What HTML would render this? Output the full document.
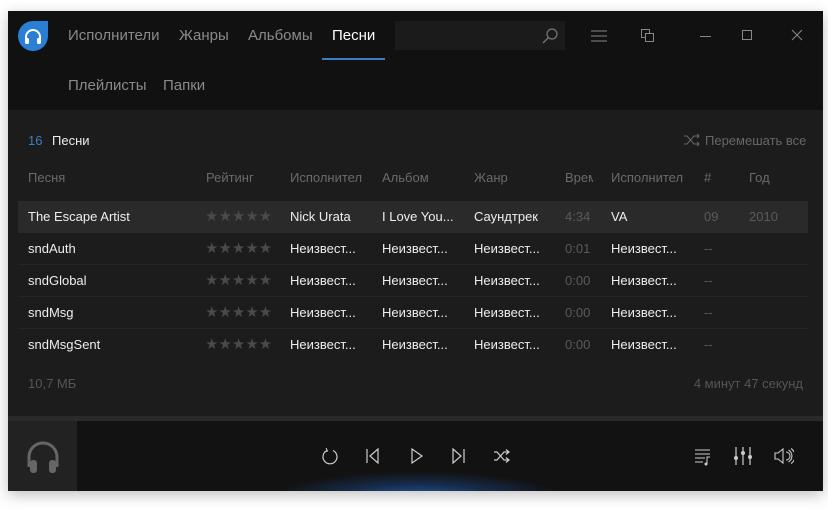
<!DOCTYPE html>
<html><head><meta charset="utf-8"><style>
*{margin:0;padding:0;box-sizing:border-box}
body{width:828px;height:513px;background:#fff;position:relative;overflow:hidden;font-family:"Liberation Sans",sans-serif;font-size:13px}
#win{position:absolute;left:8px;top:11px;width:815px;height:480px;background:#111;box-shadow:0 4px 14px rgba(0,0,0,.25);overflow:hidden}
.a{position:absolute;white-space:nowrap}
.tab{font-size:15px;color:#8a8a8a;top:16px}
#content{position:absolute;left:0;top:99px;width:815px;height:306px;background:#1c1c1c}
#sep{position:absolute;left:0;top:405px;width:815px;height:5px;background:#2a2a2a}
#bar{position:absolute;left:0;top:410px;width:815px;height:70px;background:#121212;overflow:hidden}
.row{position:absolute;left:10px;width:790px;height:32px;border-bottom:1px solid #262626}
.row span{position:absolute;top:8px;color:#eee;font-size:13px;white-space:nowrap}
.row .st{color:#4a4a4a;letter-spacing:0;font-size:15px;top:6px}
.row .g{color:#5a5a5a}
.hd{color:#6a6a6a;top:60px}
</style></head><body>
<div id="win">
<svg class="a" style="left:10px;top:10px" width="30" height="30" viewBox="0 0 30 30"><path d="M15 0H30V15A15 15 0 1 1 15 0Z" fill="#2a7fd4"/><path d="M8 21V16a7 7 0 0 1 14 0v5" fill="none" stroke="#fff" stroke-width="2"/><rect x="7" y="17" width="4" height="6" rx="1.5" fill="#fff"/><rect x="19" y="17" width="4" height="6" rx="1.5" fill="#fff"/></svg>
<div class="a tab" style="left:60px">Исполнители</div>
<div class="a tab" style="left:171px">Жанры</div>
<div class="a tab" style="left:240px">Альбомы</div>
<div class="a tab" style="left:324px;color:#fff">Песни</div>
<div class="a" style="left:314px;top:47px;width:63px;height:2px;background:#3a7fc4"></div>
<div class="a" style="left:387px;top:10px;width:170px;height:29px;background:#1b1b1b"></div>
<svg class="a" style="left:533px;top:16px" width="18" height="18"><circle cx="11" cy="7" r="5" fill="none" stroke="#777" stroke-width="1.2"/><path d="M7.5 10.5L2 16" stroke="#777" stroke-width="1.3"/></svg>
<svg class="a" style="left:582px;top:18px" width="18" height="14"><path d="M1 2H17M1 7H17M1 12H17" stroke="#888" stroke-width="1"/></svg>
<svg class="a" style="left:632px;top:17px" width="16" height="16"><rect x="1.5" y="1.5" width="8" height="8" fill="none" stroke="#888"/><rect x="5.5" y="5.5" width="8" height="8" fill="#111" stroke="#888"/></svg>
<div class="a" style="left:692px;top:25px;width:11px;height:1px;background:#888"></div>
<div class="a" style="left:734px;top:19px;width:10px;height:10px;border:1px solid #888"></div>
<svg class="a" style="left:783px;top:18px" width="12" height="12"><path d="M1 1L11 11M11 1L1 11" stroke="#888"/></svg>
<div class="a tab" style="left:60px;top:66px">Плейлисты</div>
<div class="a tab" style="left:155px;top:66px">Папки</div>
<div id="content">
<div class="a" style="left:20px;top:23px;color:#3a7fc4">16</div>
<div class="a" style="left:44px;top:23px;color:#eee">Песни</div>
<svg class="a" style="left:675px;top:24px" width="18" height="12"><path d="M1 2h3l7 8h5M1 10h3l7-8h5M14 0l2 2-2 2M14 8l2 2-2 2" fill="none" stroke="#666"/></svg>
<div class="a" style="left:697px;top:23px;color:#666">Перемешать все</div>
<div class="a hd" style="left:20px">Песня</div>
<div class="a hd" style="left:198px">Рейтинг</div>
<div class="a hd" style="left:282px">Исполнител</div>
<div class="a hd" style="left:374px">Альбом</div>
<div class="a hd" style="left:466px">Жанр</div>
<div class="a hd" style="left:557px;width:28px;overflow:hidden">Время</div>
<div class="a hd" style="left:603px">Исполнител</div>
<div class="a hd" style="left:696px">#</div>
<div class="a hd" style="left:741px">Год</div>

<div class="row" style="top:91px;background:#2a2a2a;border:none"><span style="left:10px">The Escape Artist</span><span class="st" style="left:187px">★★★★★</span><span style="left:272px">Nick Urata</span><span style="left:364px">I Love You...</span><span style="left:456px">Саундтрек</span><span class="g" style="left:547px">4:34</span><span style="left:593px">VA</span><span class="g" style="left:686px">09</span><span class="g" style="left:731px">2010</span></div>
<div class="row" style="top:123px"><span style="left:10px">sndAuth</span><span class="st" style="left:187px">★★★★★</span><span style="left:272px">Неизвест...</span><span style="left:364px">Неизвест...</span><span style="left:456px">Неизвест...</span><span class="g" style="left:547px">0:01</span><span style="left:593px">Неизвест...</span><span class="g" style="left:686px">--</span></div>
<div class="row" style="top:155px"><span style="left:10px">sndGlobal</span><span class="st" style="left:187px">★★★★★</span><span style="left:272px">Неизвест...</span><span style="left:364px">Неизвест...</span><span style="left:456px">Неизвест...</span><span class="g" style="left:547px">0:00</span><span style="left:593px">Неизвест...</span><span class="g" style="left:686px">--</span></div>
<div class="row" style="top:187px"><span style="left:10px">sndMsg</span><span class="st" style="left:187px">★★★★★</span><span style="left:272px">Неизвест...</span><span style="left:364px">Неизвест...</span><span style="left:456px">Неизвест...</span><span class="g" style="left:547px">0:00</span><span style="left:593px">Неизвест...</span><span class="g" style="left:686px">--</span></div>
<div class="row" style="top:219px;border:none"><span style="left:10px">sndMsgSent</span><span class="st" style="left:187px">★★★★★</span><span style="left:272px">Неизвест...</span><span style="left:364px">Неизвест...</span><span style="left:456px">Неизвест...</span><span class="g" style="left:547px">0:00</span><span style="left:593px">Неизвест...</span><span class="g" style="left:686px">--</span></div>
<div class="a" style="left:20px;top:266px;color:#555">10,7 МБ</div>
<div class="a" style="right:20px;top:266px;color:#555">4 минут 47 секунд</div>
</div>
<div id="sep"></div>
<div id="bar">
<div class="a" style="left:260px;top:50px;width:300px;height:60px;border-radius:50%;background:radial-gradient(ellipse at center,rgba(40,120,220,.85) 0%,rgba(30,90,180,.35) 40%,rgba(17,17,17,0) 70%)"></div>
<div class="a" style="left:0;top:0;width:69px;height:70px;background:#222"></div>
<svg class="a" style="left:17px;top:18px" width="36" height="36" viewBox="0 0 36 36"><path d="M4 28V18a14 14 0 0 1 28 0v10" fill="none" stroke="#666" stroke-width="3"/><rect x="5" y="21" width="7" height="13" rx="3" fill="#666"/><rect x="24" y="21" width="7" height="13" rx="3" fill="#666"/></svg>
<svg class="a" style="left:312px;top:26px" width="20" height="20"><path d="M7 3.5A7 7 0 1 0 13 3.5" fill="none" stroke="#ccc" stroke-width="1.2"/><path d="M6 1l1.5 3L4.5 5" fill="none" stroke="#ccc"/></svg>
<svg class="a" style="left:357px;top:27px" width="16" height="16"><path d="M2 1v14M13 1L5 8l8 7z" fill="none" stroke="#ccc" stroke-width="1.2"/></svg>
<svg class="a" style="left:401px;top:27px" width="16" height="16"><path d="M3 1l10 7-10 7z" fill="none" stroke="#ccc" stroke-width="1.2"/></svg>
<svg class="a" style="left:443px;top:27px" width="16" height="16"><path d="M13 1v14M2 1l8 7-8 7z" fill="none" stroke="#ccc" stroke-width="1.2"/></svg>
<svg class="a" style="left:485px;top:27px" width="18" height="16"><path d="M1 4h3l7 8h5M1 12h3l7-8h5M13 1.5l3 2.5-3 2.5M13 9.5l3 2.5-3 2.5" fill="none" stroke="#ccc" stroke-width="1.2"/></svg>
<svg class="a" style="left:686px;top:27px" width="18" height="18"><path d="M1 2h15M1 6h15M1 10h10M1 14h8" stroke="#ccc" stroke-width="1.1"/><path d="M13 16V9h3" fill="none" stroke="#ccc"/><circle cx="12" cy="16" r="1.5" fill="#ccc"/></svg>
<svg class="a" style="left:725px;top:25px" width="20" height="20"><path d="M3 1v18M10 1v18M17 1v18" stroke="#ccc" stroke-width="1.2"/><circle cx="3" cy="12" r="2" fill="#ccc"/><circle cx="10" cy="7" r="2" fill="#ccc"/><circle cx="17" cy="11" r="2" fill="#ccc"/></svg>
<svg class="a" style="left:766px;top:26px" width="20" height="18"><path d="M1 6h3l5-4v14l-5-4H1z" fill="none" stroke="#ccc" stroke-width="1.1"/><path d="M12 5a4 4 0 0 1 0 8M14.5 3a7 7 0 0 1 0 12M17 1.5a9 9 0 0 1 0 15" fill="none" stroke="#ccc" stroke-width="1.1"/></svg>
</div>
</div>
</body></html>
